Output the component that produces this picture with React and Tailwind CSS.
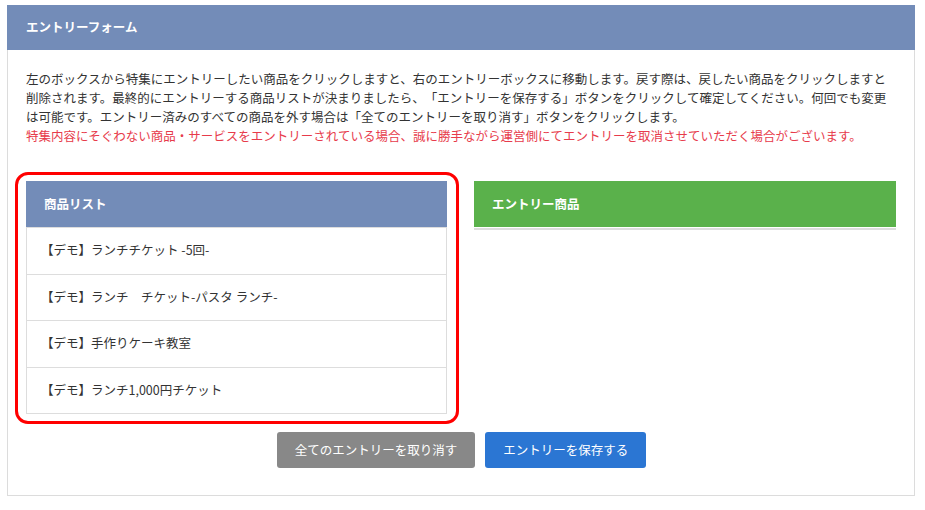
export default function App() {
  const items = [
    "【デモ】ランチチケット -5回-",
    "【デモ】ランチ　チケット-パスタ ランチ-",
    "【デモ】手作りケーキ教室",
    "【デモ】ランチ1,000円チケット",
  ];
  return (
    <div
      className="w-[925px] h-[510px] bg-white pt-[5px] pl-[7px] pr-[10px] [text-spacing-trim:space-all]"
      style={{ fontFamily: '"Noto Sans CJK JP", "Noto Sans", sans-serif' }}
    >
      <div className="border border-[#dcdcdc] h-[491px] flex flex-col">
        <div className="h-[45px] -mx-px -mt-px bg-[#738cb8] flex items-center pl-[19px] text-white text-[12.5px] font-bold">
          エントリーフォーム
        </div>
        <div className="pt-[19px] pl-[18px] pr-[17px]">
          <p className="text-[12.5px] leading-[19px] text-[#333]">
            左のボックスから特集にエントリーしたい商品をクリックしますと、右のエントリーボックスに移動します。戻す際は、戻したい商品をクリックしますと削除されます。最終的にエントリーする商品リストが決まりましたら、「エントリーを保存する」ボタンをクリックして確定してください。何回でも変更は可能です。エントリー済みのすべての商品を外す場合は「全てのエントリーを取り消す」ボタンをクリックします。
            <br />
            <span className="text-[#e73b4b]">
              特集内容にそぐわない商品・サービスをエントリーされている場合、誠に勝手ながら運営側にてエントリーを取消させていただく場合がございます。
            </span>
          </p>
          <div className="mt-[36px] grid grid-cols-[421px_422px] gap-x-[27px] items-start">
            <div className="relative">
              <div className="absolute left-[-11px] top-[-9px] right-[-12px] bottom-[-10px] border-[3px] border-[#ff0000] rounded-[13px] pointer-events-none" />
              <div className="h-[46px] bg-[#738cb8] flex items-center pl-[18px] text-white text-[12.5px] font-bold">
                商品リスト
              </div>
              <ul className="border border-[#dddddd] border-b-0">
                {items.map((t) => (
                  <li
                    key={t}
                    className="h-[46.5px] border-b border-[#dddddd] flex items-center pl-[14px] text-[12.5px] text-[#333]"
                  >
                    {t}
                  </li>
                ))}
              </ul>
            </div>
            <div>
              <div className="h-[46px] bg-[#5ab14b] flex items-center pl-[18px] text-white text-[12.5px] font-bold">
                エントリー商品
              </div>
              <div className="mt-px h-[2px] bg-[#dddddd]" />
            </div>
          </div>
          <div className="mt-[18px] flex justify-center gap-[10px]">
            <button className="h-[36px] px-[18px] rounded-[3px] bg-[#888888] text-white text-[12.5px] whitespace-nowrap">
              全てのエントリーを取り消す
            </button>
            <button className="h-[36px] px-[18px] rounded-[3px] bg-[#2b76d3] text-white text-[12.5px] whitespace-nowrap">
              エントリーを保存する
            </button>
          </div>
        </div>
      </div>
    </div>
  );
}
